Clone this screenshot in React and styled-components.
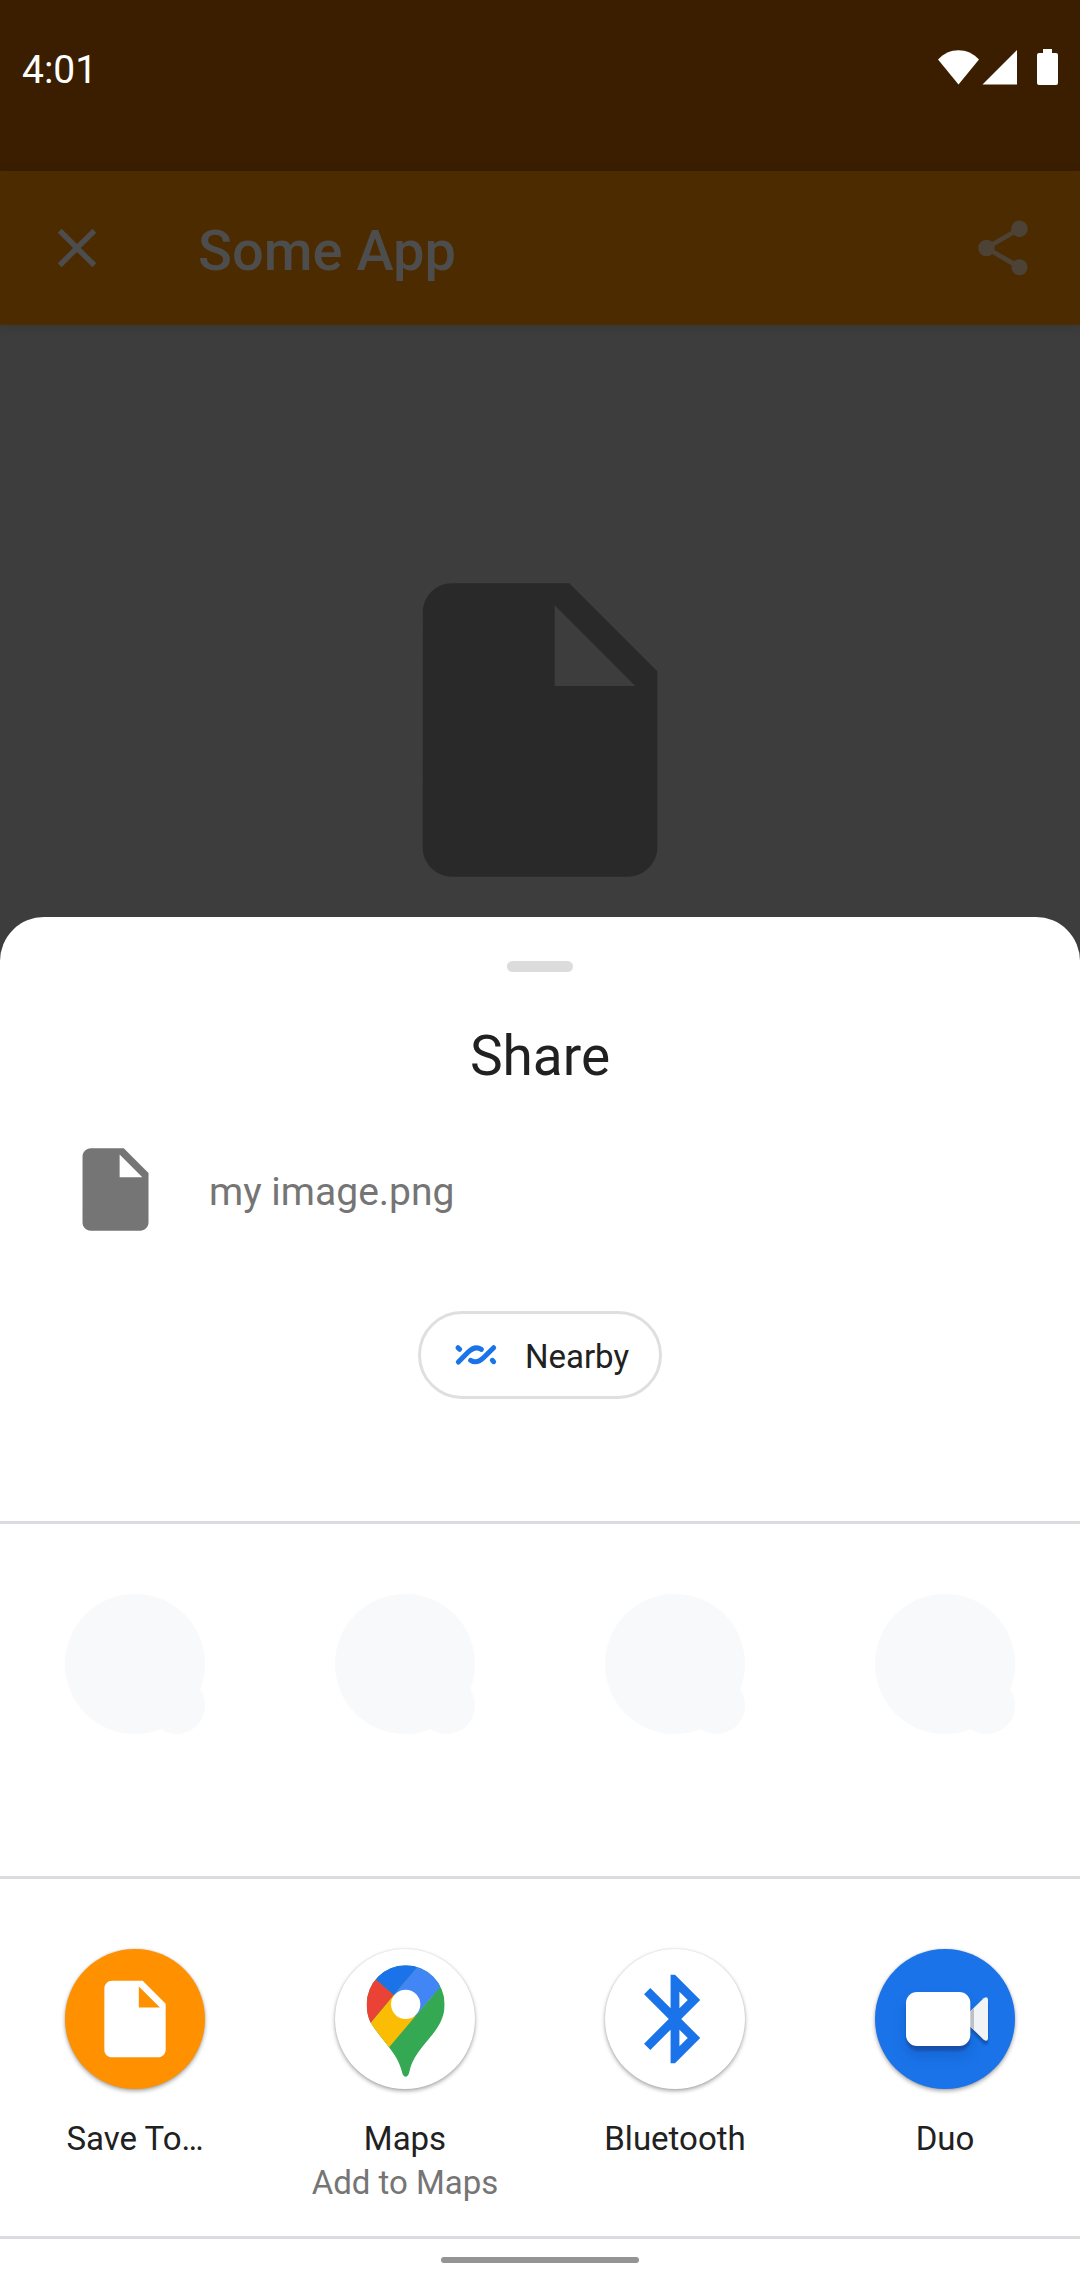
import React from "react";
import styled, { createGlobalStyle } from "styled-components";

const GlobalStyle = createGlobalStyle`
  *, *::before, *::after { box-sizing: border-box; }
  body {
    margin: 0;
    background: #3d3d3d;
    font-family: Roboto, "Liberation Sans", sans-serif;
    color: #212121;
  }
  button { font: inherit; color: inherit; background: none; border: 0; padding: 0; margin: 0; cursor: pointer; }
  h1, h2, p { margin: 0; font-weight: 400; }
  svg { display: block; flex: none; }
`;

const Screen = styled.div`
  min-height: 100vh;
  display: flex;
  flex-direction: column;
`;

const StatusBar = styled.header`
  display: flex;
  align-items: flex-start;
  justify-content: space-between;
  min-height: 171px;
  padding: 48px 22px;
  background: #3b1e00;
  color: #fff;
`;

const Clock = styled.time`
  font-size: 39px;
  line-height: 44px;
`;

const AppBar = styled.div`
  display: flex;
  align-items: center;
  min-height: 154px;
  padding: 0 44px;
  background: #4c2b00;
  box-shadow: 0 2px 10px rgba(0, 0, 0, 0.12);
  color: #4d4d4d;
`;

const AppTitle = styled.h1`
  flex: 1;
  padding: 6px 0 0 88px;
  font-size: 56px;
  line-height: 64px;
  font-weight: 500;
`;

const IconButton = styled.button`
  color: ${(p) => p.$color};
`;

const Preview = styled.main`
  flex: 1 0 auto;
  display: flex;
  justify-content: center;
  align-items: flex-start;
  padding: 229px 0 11px;
  color: #292929;
`;

const Sheet = styled.section`
  background: #fff;
  border-radius: 44px 44px 0 0;
`;

const SheetHeader = styled.div`
  display: flex;
  flex-direction: column;
  align-items: center;
  gap: 52px;
  padding: 44px 66px 122px;
  border-bottom: 3px solid #dadce0;
`;

const Handle = styled.div`
  width: 66px;
  height: 11px;
  border-radius: 6px;
  background: #dcdcdc;
`;

const SheetTitle = styled.h2`
  font-size: 55px;
  line-height: 64px;
`;

const FileRow = styled.div`
  align-self: stretch;
  display: flex;
  align-items: center;
  gap: 44px;
  margin-bottom: 20px;
  color: #757575;
`;

const FileName = styled.p`
  padding-top: 4px;
  font-size: 39px;
  line-height: 44px;
`;

const Chip = styled.button`
  display: flex;
  align-items: center;
  gap: 24px;
  height: 88px;
  padding: 0 30px;
  border: 3px solid #dfdfdf;
  border-radius: 44px;
`;

const ChipLabel = styled.span`
  padding-top: 4px;
  font-size: 33px;
  line-height: 44px;
`;

const TargetGrid = styled.div`
  display: grid;
  grid-template-columns: repeat(4, 1fr);
  justify-items: center;
  padding: 70px 0 ${(p) => p.$bottom}px;
  border-bottom: 3px solid #dadce0;
`;

const ContactPlaceholder = styled.div`
  position: relative;
  width: 140px;
  height: 140px;
  border-radius: 50%;
  background: #f8f9fb;

  &::after {
    content: "";
    position: absolute;
    right: 0;
    bottom: 0;
    width: 57px;
    height: 57px;
    border-radius: 50%;
    background: #f8f9fb;
  }
`;

const Target = styled.button`
  display: flex;
  flex-direction: column;
  align-items: center;
  width: 100%;
  font-size: 33px;
  line-height: 44px;
`;

const TargetIcon = styled.span`
  display: grid;
  place-items: center;
  width: 140px;
  height: 140px;
  margin-bottom: 28px;
  border-radius: 50%;
  background: ${(p) => p.$bg};
  box-shadow: 0 2px 4px rgba(0, 0, 0, 0.34), 0 0 2px rgba(0, 0, 0, 0.12);
  color: #fff;
`;

const TargetDetail = styled.span`
  color: #757575;
`;

const NavBar = styled.footer`
  display: flex;
  justify-content: center;
  padding: 18px 0 17px;
`;

const NavPill = styled.div`
  width: 198px;
  height: 6px;
  border-radius: 3px;
  background: #949494;
`;

const StatusIcons = () => (
  <svg width="120" height="37" viewBox="938 48 120 37" fill="#fff" aria-hidden="true">
    <path d="M938 59.5C949 47 968 47 979 59.5L958.5 84.5Z" />
    <path d="M1017 50V84.5H982.5Z" />
    <path d="M1043 49h9v4h4a2 2 0 0 1 2 2v28a2 2 0 0 1-2 2h-17a2 2 0 0 1-2-2v-28a2 2 0 0 1 2-2h4z" />
  </svg>
);

const CloseIcon = () => (
  <svg width="66" height="66" viewBox="0 0 24 24" fill="currentColor" aria-hidden="true">
    <path d="M19 6.41 17.59 5 12 10.59 6.41 5 5 6.41 10.59 12 5 17.59 6.41 19 12 13.41 17.59 19 19 17.59 13.41 12z" />
  </svg>
);

const ShareIcon = () => (
  <svg width="66" height="66" viewBox="0 0 24 24" fill="currentColor" aria-hidden="true">
    <path d="M18 16.08c-.76 0-1.44.3-1.96.77L8.91 12.7c.05-.23.09-.46.09-.7s-.04-.47-.09-.7l7.05-4.11c.54.5 1.25.81 2.04.81 1.66 0 3-1.34 3-3s-1.34-3-3-3-3 1.34-3 3c0 .24.04.47.09.7L8.04 9.81C7.5 9.31 6.79 9 6 9c-1.66 0-3 1.34-3 3s1.34 3 3 3c.79 0 1.5-.31 2.04-.81l7.12 4.16c-.05.21-.08.43-.08.65 0 1.61 1.31 2.92 2.92 2.92s2.92-1.31 2.92-2.92-1.31-2.92-2.92-2.92z" />
  </svg>
);

const FileIcon = ({ size }) => (
  <svg width={size} height={size} viewBox="0 0 24 24" fill="currentColor" aria-hidden="true">
    <path d="M6 2c-1.1 0-1.99.9-1.99 2L4 20c0 1.1.89 2 1.99 2H18c1.1 0 2-.9 2-2V8l-6-6H6zm7 7V3.5L18.5 9H13z" />
  </svg>
);

const NearbyIcon = () => (
  <svg width="50" height="50" viewBox="123 91 150 150" fill="none" stroke="#1a73e8" strokeWidth="15" aria-hidden="true">
    <path strokeLinecap="round" d="M145 187L174 158C188 144 201 141 214 149" />
    <path strokeLinecap="round" d="M251 144L222 173C208 187 195 190 182 182" />
    <path strokeLinecap="round" d="M144 144L149 149M247 182L251 186" />
  </svg>
);

const MapsIcon = () => (
  <svg width="140" height="140" viewBox="195 117 420 420" aria-hidden="true">
    <clipPath id="pin">
      <path d="M290 283A117 117 0 0 1 524 283C524 317 511 342 493 366C472 394 445 421 428 455C422 467 420 478 417 490C413 504 401 504 397 490C388 455 376 437 357 412C340 388 319 366 302 338C294 322 290 303 290 283Z" />
    </clipPath>
    <g clipPath="url(#pin)">
      <path fill="#34a853" d="M195 117H615V537H195Z" />
      <path fill="#fbbc04" d="M270 376L407 212L490 255L330 444Z" />
      <path fill="#4285f4" d="M371 255L480 125L560 172L435 320Z" />
      <path fill="#1a73e8" d="M260 159L371 255L480 125L400 110Z" />
      <path fill="#ea4335" d="M260 159L371 255L270 376Z" />
    </g>
    <circle cx="407" cy="283" r="44" fill="#fff" />
  </svg>
);

const BluetoothIcon = () => (
  <svg width="106" height="106" viewBox="0 0 24 24" fill="#1a73e8" aria-hidden="true">
    <path d="M17.71 7.71L12 2h-1v7.59L6.41 5 5 6.41 10.59 12 5 17.59 6.41 19 11 14.41V22h1l5.71-5.71-4.3-4.29 4.3-4.29zM13 5.83l1.88 1.88L13 9.59V5.83zm1.88 10.46L13 18.17v-3.76l1.88 1.88z" />
  </svg>
);

const lens = "M481 304L521 265Q532 258 534 268V386Q532 397 521 389L481 350Z";

const DuoIcon = () => (
  <svg width="140" height="140" viewBox="195 117 420 420" aria-hidden="true">
    <defs>
      <filter id="soft" x="-50%" y="-50%" width="200%" height="200%">
        <feGaussianBlur stdDeviation="20" />
      </filter>
      <filter id="edge" x="-20%" y="-20%" width="140%" height="140%">
        <feGaussianBlur stdDeviation="3" />
      </filter>
    </defs>
    <rect x="290" y="275" width="190" height="160" rx="33" fill="#0d47a1" opacity="0.35" filter="url(#soft)" />
    <g fill="#174ea6" opacity="0.85" filter="url(#edge)">
      <rect x="290" y="260" width="190" height="162" rx="33" />
      <path d={lens} transform="translate(0 12)" />
    </g>
    <path fill="#f1f3f4" d={lens} />
    <path fill="#bdc1c6" d="M481 304L492 293V361L481 350Z" />
    <rect x="288" y="246" width="193" height="162" rx="33" fill="#fff" />
  </svg>
);

const targets = [
  { name: "Save To…", bg: "#ff9100", icon: <FileIcon size={92} /> },
  { name: "Maps", detail: "Add to Maps", bg: "#fff", icon: <MapsIcon /> },
  { name: "Bluetooth", bg: "#fff", icon: <BluetoothIcon /> },
  { name: "Duo", bg: "#1a73e8", icon: <DuoIcon /> },
];

export default function App() {
  return (
    <Screen>
      <GlobalStyle />
      <StatusBar>
        <Clock>4:01</Clock>
        <StatusIcons />
      </StatusBar>
      <AppBar>
        <IconButton type="button" aria-label="Close" $color="#4d4d4d">
          <CloseIcon />
        </IconButton>
        <AppTitle>Some App</AppTitle>
        <IconButton type="button" aria-label="Share" $color="#4c4336">
          <ShareIcon />
        </IconButton>
      </AppBar>
      <Preview>
        <FileIcon size={352} />
      </Preview>
      <Sheet>
        <SheetHeader>
          <Handle />
          <SheetTitle>Share</SheetTitle>
          <FileRow>
            <FileIcon size={99} />
            <FileName>my image.png</FileName>
          </FileRow>
          <Chip type="button">
            <NearbyIcon />
            <ChipLabel>Nearby</ChipLabel>
          </Chip>
        </SheetHeader>
        <TargetGrid $bottom={142}>
          {[0, 1, 2, 3].map((slot) => (
            <ContactPlaceholder key={slot} />
          ))}
        </TargetGrid>
        <TargetGrid $bottom={31}>
          {targets.map((t) => (
            <Target type="button" key={t.name}>
              <TargetIcon $bg={t.bg}>{t.icon}</TargetIcon>
              <span>{t.name}</span>
              {t.detail && <TargetDetail>{t.detail}</TargetDetail>}
            </Target>
          ))}
        </TargetGrid>
        <NavBar>
          <NavPill />
        </NavBar>
      </Sheet>
    </Screen>
  );
}
